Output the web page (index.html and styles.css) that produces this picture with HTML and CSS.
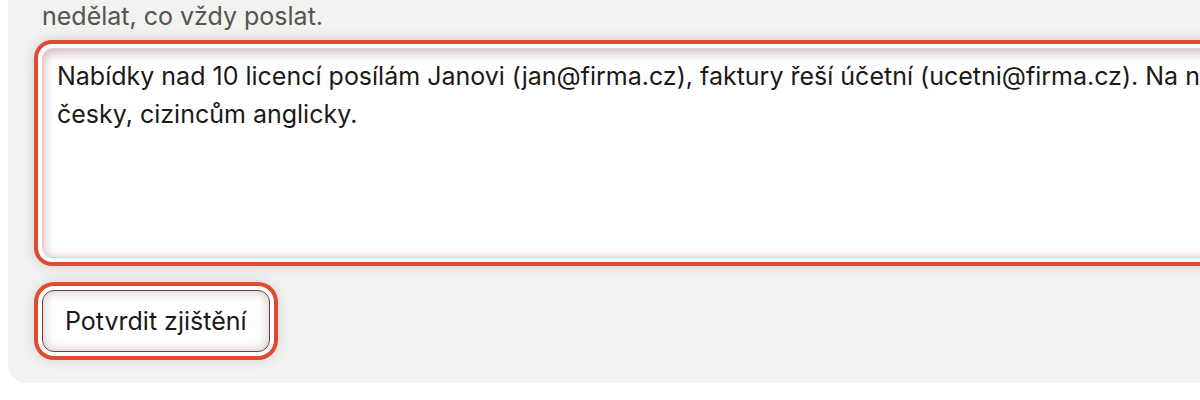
FILE: index.html
```html
<!DOCTYPE html>
<html lang="cs">
<head>
<meta charset="utf-8">
<link rel="stylesheet" href="styles.css">
</head>
<body>
<div class="card">
  <p class="hint">nedělat, co vždy poslat.</p>
  <textarea class="field">Nabídky nad 10 licencí posílám Janovi (jan@firma.cz), faktury řeší účetní (ucetni@firma.cz). Na nabídky odpovídám česky, cizincům anglicky.</textarea>
  <button class="btn">Potvrdit zjištění</button>
</div>
</body>
</html>
```
FILE: styles.css
```css
html, body {
  margin: 0;
  padding: 0;
  background: #ffffff;
  overflow: hidden;
  width: 1200px;
  height: 400px;
}
.card {
  margin: -40px 0 0 8px;
  width: 1500px;
  box-sizing: border-box;
  background: #f2f2f0;
  border-radius: 18px;
  padding: 37px 34px 31px;
  display: flex;
  flex-direction: column;
  align-items: flex-start;
  font-family: Inter, "Noto Sans", sans-serif;
}
.hint {
  margin: 0 0 12.6px;
  font-size: 25px;
  line-height: 38.4px;
  color: #57534f;
}
.field {
  box-sizing: border-box;
  width: 1390px;
  height: 210px;
  margin: 0;
  padding: 8px 14px;
  font-family: Inter, "Noto Sans", sans-serif;
  font-size: 25px;
  line-height: 38.4px;
  color: #1c1917;
  background: #ffffff;
  border: 1px solid #e2cfcf;
  border-radius: 10px;
  resize: none;
  outline: none;
  box-shadow:
    inset 0 4px 12px rgba(150, 90, 90, 0.34),
    inset 0 0 8px rgba(150, 90, 90, 0.2),
    0 0 0 4px #ffffff,
    0 0 0 8px #e04a2f,
    0 0 14px 8px rgba(0, 0, 0, 0.14);
}
.btn {
  margin-top: 32px;
  box-sizing: border-box;
  height: 62px;
  padding: 0 22px;
  font-family: Inter, "Noto Sans", sans-serif;
  font-size: 25px;
  color: #1c1917;
  background: #ffffff;
  border: 1px solid #5a4646;
  border-radius: 12px;
  cursor: pointer;
  box-shadow:
    inset 0 0 12px rgba(150, 90, 90, 0.4),
    0 0 0 4px #ffffff,
    0 0 0 8px #e04a2f,
    0 0 14px 8px rgba(0, 0, 0, 0.12);
}
```
